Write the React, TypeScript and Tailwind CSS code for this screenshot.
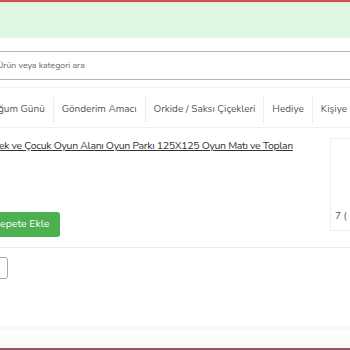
export default function App() {
  const nav = ["Doğum Günü", "Gönderim Amacı", "Orkide / Saksı Çiçekleri", "Hediye", "Kişiye Özel"];
  return (
    <div className="w-[350px] h-[350px] overflow-hidden bg-white flex flex-col font-['Nunito','Lato',sans-serif]">
      {/* Top strip */}
      <div className="h-[2px] bg-[#c65553] shrink-0" />
      <div className="h-[1px] bg-[#f4dcd6] shrink-0" />
      <div className="h-[35px] bg-[#dff6e3] shrink-0" />

      {/* Search */}
      <div className="mt-[13px] h-[29px] border-y border-[#b3b3b3] flex items-center shrink-0">
        <span className="-ml-[3px] text-[8.7px] text-[#666]">Ürün veya kategori ara</span>
      </div>

      {/* Category nav */}
      <div className="mt-[7px] h-[41px] pt-[4px] border-y border-[#f0f0f0] flex items-center shrink-0 overflow-hidden">
        <div className="flex items-center -ml-[15px] whitespace-nowrap">
          {nav.map((n, i) => (
            <div key={n} className="flex items-center">
              {i > 0 && <div className="w-px h-[26px] bg-[#ececec] mx-[8px]" />}
              <span className="text-[10px] text-[#555]">{n}</span>
            </div>
          ))}
        </div>
      </div>

      {/* Product row */}
      <div className="flex shrink-0">
        <div className="flex-1 min-w-0 flex flex-col">
          <a className="mt-[10px] -ml-[19px] text-[10.5px] tracking-[-0.3px] text-[#333] underline whitespace-nowrap">
            Bebek ve Çocuk Oyun Alanı Oyun Parkı 125X125 Oyun Matı ve Topları
          </a>
          <button className="mt-[58px] -ml-[17px] w-[77px] h-[25px] rounded-[3px] bg-[#4caf50] text-white text-[10.5px] flex items-center justify-center">
            Sepete Ekle
          </button>
        </div>
        <div className="w-[20px] mt-[10px] h-[93px] border-l border-t border-b border-[#efefef] flex items-end pb-[6px] pl-[4px]">
          <span className="text-[10px] text-[#555] whitespace-nowrap">7 (</span>
        </div>
      </div>

      <div className="mt-[10px] border-t border-[#ececec] shrink-0" />

      <div className="mt-[9px] -ml-[4px] w-[12px] h-[22px] border border-[#aaa] rounded-[3px] shrink-0" />

      <div className="flex-1" />
      <div className="h-[4px] bg-[#f8f8f8] shrink-0" />
      <div className="h-[18px] bg-gradient-to-b from-white to-[#fdfaf5] shrink-0" />
      <div className="h-[2px] bg-[#9a5565] shrink-0" />
    </div>
  );
}
